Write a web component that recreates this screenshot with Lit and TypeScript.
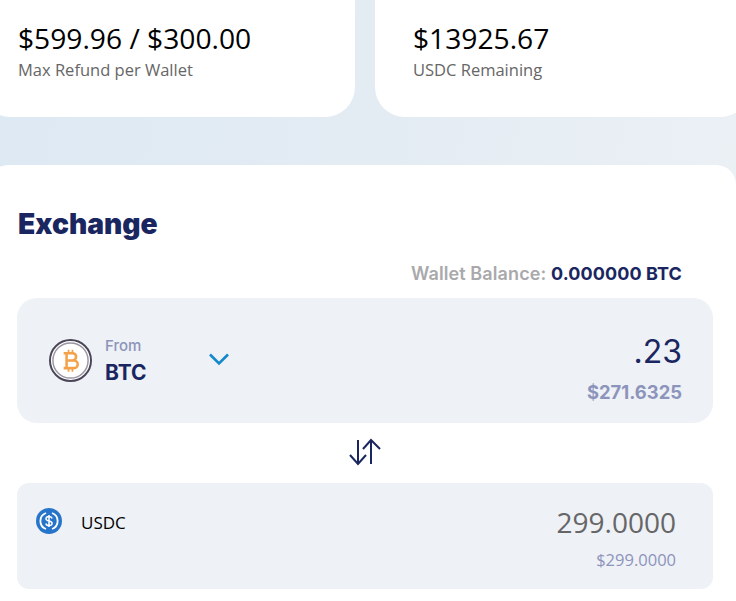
import { LitElement, html, css } from "lit";
import { customElement } from "lit/decorators.js";

@customElement("app-root")
export class AppRoot extends LitElement {
  static styles = css`
    :host {
      display: block;
      width: 736px;
      height: 601px;
      overflow: hidden;
      background: linear-gradient(100deg, #dde9f3 0%, #e4ecf3 50%, #ecf1f5 100%);
      font-family: "Open Sans", "Noto Sans", sans-serif;
    }
    .stats {
      display: flex;
      gap: 20px;
      width: 770px;
      margin-left: -20px;
      height: 117px;
    }
    .stat {
      width: 375px;
      height: 117px;
      box-sizing: border-box;
      background: #fff;
      border-radius: 0 0 30px 30px;
      padding: 19px 0 0 38px;
    }
    .stat-value {
      font-size: 28.2px;
      line-height: 38px;
      color: #000;
    }
    .stat-label {
      font-size: 16.5px;
      line-height: 24px;
      margin-top: 1px;
      color: #666;
    }
    .panel {
      margin: 48px 0 0 -12px;
      width: 748px;
      height: 436px;
      box-sizing: border-box;
      background: #fff;
      border-radius: 20px 20px 0 0;
      padding: 39px 23px 0 29px;
      font-family: Inter, "Liberation Sans", sans-serif;
    }
    h2 {
      margin: 0;
      padding-left: 1px;
      font-size: 28.2px;
      line-height: 40px;
      font-weight: 900;
      color: #1a2660;
    }
    .balance {
      margin-top: 18px;
      padding-right: 31px;
      text-align: right;
      font-size: 18px;
      line-height: 24px;
      letter-spacing: 0.1px;
      font-weight: 600;
      color: #a9a9ac;
    }
    .balance b {
      font-weight: 700;
      color: #1a2660;
    }
    .from {
      margin-top: 12px;
      height: 125px;
      box-sizing: border-box;
      background: #eef1f6;
      border-radius: 20px;
      display: flex;
      align-items: center;
      padding: 0 31px 0 32px;
    }
    .coin {
      width: 43px;
      height: 43px;
      flex: none;
      display: block;
    }
    .from-names {
      margin-left: 13px;
      display: flex;
      flex-direction: column;
      gap: 4px;
    }
    .from-label {
      font-size: 15px;
      line-height: 20px;
      font-weight: 500;
      color: #8d94bb;
    }
    .from-coin {
      font-size: 21px;
      line-height: 26px;
      font-weight: 700;
      color: #1a2660;
    }
    .chevron {
      margin-left: 61px;
      width: 22px;
      height: 14px;
      display: block;
      margin-top: -3px;
    }
    .amounts {
      margin-left: auto;
      padding-top: 15px;
      text-align: right;
    }
    .amount {
      font-size: 32px;
      line-height: 40px;
      font-weight: 400;
      color: #1a2660;
    }
    .fiat {
      margin-top: 7px;
      font-size: 18.4px;
      line-height: 26px;
      font-weight: 700;
      color: #8d94bb;
    }
    .swap {
      height: 60px;
      box-sizing: border-box;
      padding: 0 0 2px 0;
      display: flex;
      align-items: center;
      justify-content: center;
    }
    .swap svg {
      width: 32px;
      height: 28px;
      display: block;
    }
    .to {
      height: 106px;
      box-sizing: border-box;
      background: #eef1f6;
      border-radius: 12px;
      display: flex;
      align-items: flex-start;
      padding: 25px 37px 0 19px;
      font-family: "Open Sans", "Noto Sans", sans-serif;
    }
    .usdc {
      width: 26px;
      height: 26px;
      flex: none;
      display: block;
    }
    .to-coin {
      margin: 2px 0 0 19px;
      font-size: 17px;
      line-height: 26px;
      color: #000;
    }
    .to-amounts {
      margin-left: auto;
      text-align: right;
      margin-top: -5px;
    }
    .to-amount {
      font-size: 28px;
      line-height: 38px;
      color: #666;
    }
    .to-fiat {
      margin-top: 7px;
      font-size: 16.5px;
      line-height: 24px;
      color: #8d94bb;
    }
  `;

  render() {
    return html`
      <div class="stats">
        <div class="stat">
          <div class="stat-value">$599.96 / $300.00</div>
          <div class="stat-label">Max Refund per Wallet</div>
        </div>
        <div class="stat">
          <div class="stat-value">$13925.67</div>
          <div class="stat-label">USDC Remaining</div>
        </div>
      </div>
      <div class="panel">
        <h2>Exchange</h2>
        <div class="balance">Wallet Balance: <b>0.000000 BTC</b></div>
        <div class="from">
          <svg class="coin" viewBox="0 0 44 44">
            <circle cx="22" cy="22" r="21" fill="#fff" stroke="#4b4658" stroke-width="2"/>
            <circle cx="22" cy="22" r="18" fill="none" stroke="#9a96a2" stroke-width="1.500"/>
            <g fill="none" stroke="#f4a24a" stroke-width="2.600">
              <path d="M15 14.500h9a3.700 3.700 0 0 1 0 7.500h-6M18 22h7.500a3.900 3.900 0 0 1 0 7.800h-10.500"/>
              <path d="M18 14v16.300" />
              <path d="M20 11v3.500M24 11v3.500M20 29.500v4M24 29.500v4" stroke-width="1.800"/>
            </g>
          </svg>
          <div class="from-names">
            <span class="from-label">From</span>
            <span class="from-coin">BTC</span>
          </div>
          <svg class="chevron" viewBox="0 0 22 14">
            <path d="M2 2.500l9 9 9-9" fill="none" stroke="#1488cc" stroke-width="2.600"/>
          </svg>
          <div class="amounts">
            <div class="amount">.23</div>
            <div class="fiat">$271.6325</div>
          </div>
        </div>
        <div class="swap">
          <svg viewBox="0 0 32 28" fill="none" stroke="#1a2660" stroke-width="2">
            <path d="M9 2v24M1 17l8 9 8-9"/>
            <path d="M22 26V2M14 11l8-9 9 9"/>
          </svg>
        </div>
        <div class="to">
          <svg class="usdc" viewBox="0 0 26 26">
            <circle cx="13" cy="13" r="13" fill="#2775ca"/>
            <path d="M10 5a8.500 8.500 0 0 0 0 16M16 5a8.500 8.500 0 0 1 0 16" fill="none" stroke="#fff" stroke-width="1.800"/>
            <path d="M16 10.500c-.3-1.300-1.500-2-3-2-1.700 0-3 .9-3 2.300 0 3.200 6.100 1.400 6.100 4.500 0 1.400-1.400 2.300-3.100 2.300-1.600 0-2.800-.8-3.100-2.100M13 7v12" fill="none" stroke="#fff" stroke-width="1.500"/>
          </svg>
          <span class="to-coin">USDC</span>
          <div class="to-amounts">
            <div class="to-amount">299.0000</div>
            <div class="to-fiat">$299.0000</div>
          </div>
        </div>
      </div>
    `;
  }
}
